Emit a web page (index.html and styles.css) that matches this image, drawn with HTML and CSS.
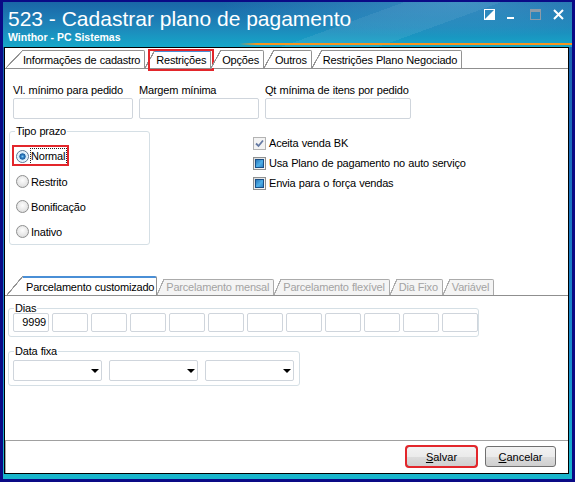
FILE: index.html
```html
<!DOCTYPE html>
<html lang="pt-BR">
  <head>
    <meta charset="utf-8">
    <title>523 - Cadastrar plano de pagamento</title>
    <link rel="stylesheet" href="styles.css">
  </head>
  <body>
    <div class="window">
      <div class="titlebar">
        <div class="titlerow">
          <div class="titles">
            <h1 class="title">523 - Cadastrar plano de pagamento</h1>
            <div class="subtitle">Winthor - PC Sistemas</div>
          </div>
          <div class="controls">
            <svg width="11" height="11" viewBox="0 0 11 11"><rect x="0.5" y="0.5" width="10" height="10" fill="none" stroke="#fff"/><path d="M10.5 0.5V10.5H0.5Z" fill="#fff"/></svg>
            <svg width="11" height="11" viewBox="0 0 11 11"><rect x="0" y="8" width="7" height="2" fill="#fff"/></svg>
            <svg width="11" height="11" viewBox="0 0 11 11"><rect x="0.5" y="0.5" width="10" height="10" fill="none" stroke="#8d9ba8"/><rect x="0" y="0" width="11" height="3" fill="#8d9ba8"/></svg>
            <svg width="11" height="11" viewBox="0 0 11 11"><path d="M1 1L10 10M10 1L1 10" stroke="#fff" stroke-width="2"/></svg>
          </div>
        </div>
        <div class="accent"></div>
      </div>

      <div class="panel">
        <div class="tabs">
          <div class="tab first">Informações de cadastro</div>
          <div class="tab active marked">Restrições</div>
          <div class="tab">Opções</div>
          <div class="tab">Outros</div>
          <div class="tab">Restrições Plano Negociado</div>
        </div>

        <div class="page">
          <div class="fields">
            <div class="field">
              <label>Vl. mínimo para pedido</label>
              <div class="box"></div>
            </div>
            <div class="field">
              <label>Margem mínima</label>
              <div class="box"></div>
            </div>
            <div class="field wide">
              <label>Qt mínima de itens por pedido</label>
              <div class="box"></div>
            </div>
          </div>

          <div class="middle">
            <fieldset class="group prazo">
              <legend>Tipo prazo</legend>
              <div class="option">
                <span class="highlight">
                  <span class="radio on"></span>
                  <span class="focus">Normal</span>
                </span>
              </div>
              <div class="option"><span class="radio"></span><span>Restrito</span></div>
              <div class="option"><span class="radio"></span><span>Bonificação</span></div>
              <div class="option"><span class="radio"></span><span>Inativo</span></div>
            </fieldset>

            <div class="checks">
              <div class="check-row">
                <span class="check disabled">
                  <svg width="11" height="11" viewBox="0 0 11 11"><path d="M2 5.5L4.5 8L9 2.5" fill="none" stroke="#6479a3" stroke-width="1.8"/></svg>
                </span>
                Aceita venda BK
              </div>
              <div class="check-row"><span class="check mixed"></span>Usa Plano de pagamento no auto serviço</div>
              <div class="check-row"><span class="check mixed"></span>Envia para o força vendas</div>
            </div>
          </div>

          <div class="subtabs">
            <div class="tab sub active">Parcelamento customizado</div>
            <div class="tab sub off">Parcelamento mensal</div>
            <div class="tab sub off">Parcelamento flexível</div>
            <div class="tab sub off">Dia Fixo</div>
            <div class="tab sub off">Variável</div>
          </div>

          <fieldset class="group dias">
            <legend>Dias</legend>
            <div class="day-grid">
              <div class="box day">9999</div>
              <div class="box day"></div>
              <div class="box day"></div>
              <div class="box day"></div>
              <div class="box day"></div>
              <div class="box day"></div>
              <div class="box day"></div>
              <div class="box day"></div>
              <div class="box day"></div>
              <div class="box day"></div>
              <div class="box day"></div>
              <div class="box day"></div>
            </div>
          </fieldset>

          <fieldset class="group datafixa">
            <legend>Data fixa</legend>
            <div class="combos">
              <div class="combo"><span class="caret"></span></div>
              <div class="combo"><span class="caret"></span></div>
              <div class="combo"><span class="caret"></span></div>
            </div>
          </fieldset>
        </div>

        <div class="footer">
          <button class="btn marked-btn"><u>S</u>alvar</button>
          <button class="btn"><u>C</u>ancelar</button>
        </div>
      </div>
    </div>
  </body>
</html>
```

FILE: styles.css
```css
body {
  margin: 0;
  font-family: "Liberation Sans", Arial, sans-serif;
  font-size: 11px;
  letter-spacing: -0.2px;
  word-spacing: 0.4px;
  color: #000;
}

/* window frame */
.window {
  box-sizing: border-box;
  width: 575px;
  height: 482px;
  display: flex;
  flex-direction: column;
  border: 3px solid #0a0a86;
  border-top-width: 2px;
  padding: 0 3px 5px 1px;
  background: linear-gradient(#1a62a9, #1b6bbb 30%, #1a8ccd 75%, #18b6cc);
}

.titlebar {
  height: 45px;
  margin: 0 -3px 0 -1px;
  display: flex;
  flex-direction: column;
  background:
    radial-gradient(60% 110% at 80% 0%, rgba(110, 205, 235, 0.35), transparent 70%),
    linear-gradient(160deg, transparent 58%, rgba(255, 255, 255, 0.07) 58%, rgba(255, 255, 255, 0.07) 72%, transparent 72%),
    linear-gradient(#1a66a7, #1e86ba 55%, #15a8c9);
}
.titlerow {
  display: flex;
  justify-content: space-between;
  padding: 0 8px 0 5px;
}
.title {
  margin: 5px 0 0;
  font-size: 21px;
  font-weight: normal;
  line-height: 24px;
  letter-spacing: 0;
  word-spacing: 0;
  color: #fff;
}
.subtitle {
  margin-top: 0;
  font-size: 10.5px;
  font-weight: bold;
  line-height: 12px;
  letter-spacing: 0;
  word-spacing: 0;
  color: #fff;
}
.controls {
  display: flex;
  gap: 12px;
  padding-top: 7px;
}
.accent {
  height: 2px;
  margin: auto 0 2px 236px;
  background: linear-gradient(90deg, rgba(247, 148, 29, 0), #f7941d 18px);
}

/* white client area */
.panel {
  flex: 1;
  display: flex;
  flex-direction: column;
  background: #fff;
  border: 1px solid #000;
}

/* tabs */
.tabs, .subtabs {
  display: flex;
  align-items: flex-end;
  border-bottom: 1px solid #8f8f8f;
}
.tabs {
  height: 20px;
  padding: 2px 0 0 1px;
  box-sizing: border-box;
  height: 21px;
}
.tab {
  --bg: #fff;
  --line: #939393;
  --top: #939393;
  --topw: 1px;
  --slant: 10px;
  position: relative;
  box-sizing: border-box;
  height: 18px;
  padding: 4px 4px 0 11px;
  line-height: 13px;
  white-space: nowrap;
  border-right: 1px solid var(--line);
  border-top-right-radius: 2px;
  background:
    linear-gradient(var(--top), var(--top)) var(--slant) 0 / 100% var(--topw) no-repeat,
    linear-gradient(to bottom right, transparent calc(50% - 0.7px), var(--line) calc(50% - 0.5px), var(--line) calc(50% + 0.5px), var(--bg) calc(50% + 0.7px)) 0 0 / var(--slant) 100% no-repeat,
    linear-gradient(var(--bg), var(--bg)) var(--slant) 0 / 100% 100% no-repeat;
}
.tab.first {
  --slant: 17px;
  padding-left: 17px;
}
.tab.active {
  --top: #4a8fd6;
  --topw: 2px;
}
.marked::after {
  content: "";
  position: absolute;
  left: 3px;
  right: -4px;
  top: -1px;
  bottom: -3px;
  border: 2px solid #e3262b;
}

.subtabs {
  margin-top: 31px;
  padding-left: 2px;
  height: 20px;
  box-sizing: border-box;
}
.tab.sub {
  height: 16px;
  padding: 2px 4px 0 9px;
  --slant: 7px;
}
.tab.sub.active {
  height: 19px;
  padding: 5px 2px 0 19px;
  --slant: 16px;
}
.tab.off {
  --bg: #f4f4f4;
  --line: #ababab;
  --top: #ababab;
  color: #a3a3a3;
}

/* page content */
.page {
  flex: 1;
  padding-top: 15px;
}
.fields {
  display: flex;
  gap: 6px;
  margin-left: 8px;
}
.field {
  width: 120px;
}
.field.wide {
  width: 146px;
}
.field label {
  display: block;
  line-height: 13px;
  white-space: nowrap;
}
.box {
  box-sizing: border-box;
  height: 21px;
  margin-top: 1px;
  border: 1px solid #cfd5dc;
  border-radius: 2px;
  background: #fff;
}

.group {
  margin: 0;
  padding: 0;
  min-inline-size: 0;
  border: 1px solid #d5dfe5;
  border-radius: 3px;
}
.group legend {
  padding: 0 1px;
  margin-left: 1px;
  line-height: 9px;
}

.middle {
  display: flex;
  align-items: flex-start;
  margin-top: 8px;
}
.prazo {
  box-sizing: border-box;
  width: 141px;
  margin-left: 4px;
  padding: 8px 6px 0;
}
.prazo legend {
  margin-left: -1px;
}
.option {
  display: flex;
  align-items: center;
  gap: 2px;
  height: 25px;
}
.highlight {
  position: relative;
  display: inline-flex;
  align-items: center;
  gap: 2px;
}
.highlight::after {
  content: "";
  position: absolute;
  left: -4px;
  right: -3px;
  top: -4px;
  bottom: -2px;
  border: 2px solid #e3262b;
}
.focus {
  padding: 1px 1px 1px 0;
  outline: 1px dotted #222;
  line-height: 13px;
}
.radio {
  box-sizing: border-box;
  width: 13px;
  height: 13px;
  border-radius: 50%;
  border: 1px solid #8e8f8f;
  background: radial-gradient(circle at 50% 40%, #fdfdfd 0, #e6e6e6 60%, #d2d2d2 100%);
}
.radio.on {
  border-color: #5b7896;
  background: radial-gradient(circle, #7fc8f4 0, #2b7cc2 1.6px, #1d5c9c 2.8px, #bfe0f6 3.4px, #e8f4fc 4.6px, #f6f9fc 100%);
}

.checks {
  margin: 6px 0 0 103px;
}
.check-row {
  display: flex;
  align-items: center;
  gap: 3px;
  height: 20px;
  white-space: nowrap;
}
.check {
  box-sizing: border-box;
  width: 13px;
  height: 13px;
  display: flex;
  align-items: center;
  justify-content: center;
  border: 1px solid #8e8f8f;
  background: linear-gradient(135deg, #dcdcdc, #fbfbfb);
}
.check.disabled {
  border-color: #b3b3b3;
  background: #f3f3f3;
}
.check.mixed::after {
  content: "";
  box-sizing: border-box;
  width: 9px;
  height: 9px;
  border: 1px solid #1a4f86;
  background: linear-gradient(135deg, #2a78bb, #4fb0e8 55%, #2c82c6);
}

.dias {
  box-sizing: border-box;
  width: 471px;
  margin: 8px 0 0 3px;
  padding: 0 1px 4px 4px;
}
.day-grid {
  display: grid;
  grid-template-columns: repeat(12, 36px);
  gap: 3px;
}
.box.day {
  height: 19px;
  margin: 0;
  padding-right: 2px;
  text-align: right;
  line-height: 17px;
}

.datafixa {
  box-sizing: border-box;
  width: 292px;
  margin: 10px 0 0 3px;
  padding: 4px 4px 4px 4px;
}
.combos {
  display: flex;
  gap: 7px;
}
.combo {
  box-sizing: border-box;
  width: 89px;
  height: 21px;
  display: flex;
  align-items: center;
  justify-content: flex-end;
  padding-right: 2px;
  border: 1px solid #cfd5dc;
  border-radius: 2px;
}
.caret {
  width: 0;
  height: 0;
  border-left: 4px solid transparent;
  border-right: 4px solid transparent;
  border-top: 4px solid #000;
}

/* bottom buttons */
.footer {
  height: 33px;
  box-sizing: border-box;
  display: flex;
  justify-content: flex-end;
  gap: 8px;
  padding: 5px 12px 0 0;
  border-top: 1px solid #a0a0a0;
  border-left: 1px solid #a8a8a8;
}
.btn {
  box-sizing: border-box;
  width: 71px;
  height: 21px;
  padding: 0;
  font: inherit;
  color: #000;
  border: 1px solid #707070;
  border-radius: 3px;
  background: linear-gradient(#f2f2f2, #ebebeb 50%, #dddddd 50%, #cfcfcf);
}
.marked-btn {
  outline: 2px solid #e3262b;
  outline-offset: -1px;
}
```
